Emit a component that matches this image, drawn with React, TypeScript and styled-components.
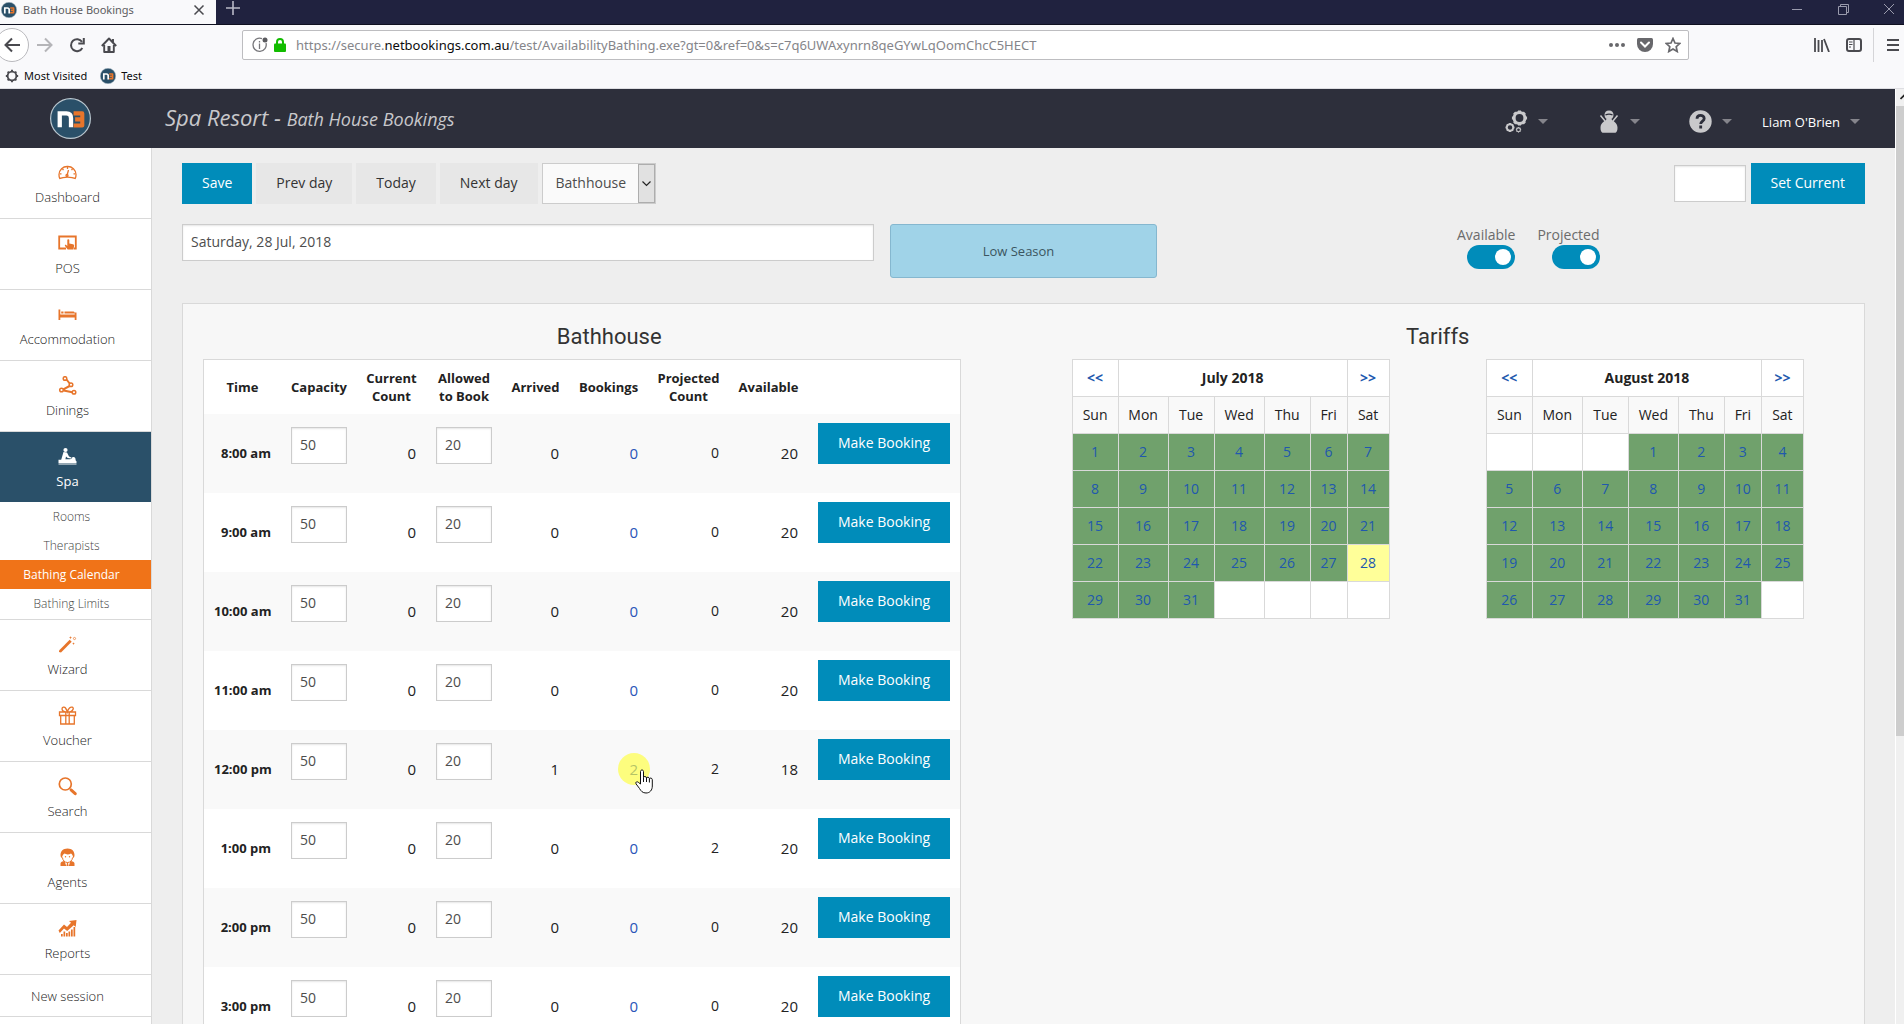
import React from "react";
import styled, { createGlobalStyle, css } from "styled-components";

const blue = "#008cba";
const orange = "#e7752b";
const line = "#d9d9d9";
const body = '"Open Sans", "Noto Sans", sans-serif';
const chrome = '"Noto Sans", "Open Sans", sans-serif';

const GlobalStyle = createGlobalStyle`
  *, *::before, *::after { box-sizing: border-box; }
  body { margin: 0; font-family: ${body}; font-size: 14px; color: #222; background: #eee; }
  a { color: inherit; text-decoration: none; }
  button, input, select { font-family: inherit; border-radius: 0; margin: 0; }
  ul { list-style: none; margin: 0; padding: 0; }
`;

const Window = styled.div`
  height: 100vh;
  display: flex;
  flex-direction: column;
  overflow: hidden;
`;

/* ---------- browser frame ---------- */

const TitleBar = styled.div`
  flex: none;
  height: 25px;
  display: flex;
  overflow: hidden;
  background: #20223f;
  border-bottom: 1px solid #0f1020;
`;

const Tab = styled.div`
  width: 216px;
  height: 25px;
  padding: 0 11px 6px 1px;
  display: flex;
  align-items: center;
  gap: 6px;
  background: #f9f9fb;
  font: 11px/18px ${chrome};
  color: #5c5c60;
`;

const TabName = styled.span`
  flex: 1;
  white-space: nowrap;
`;

const IconButton = styled.button<{ $w?: number; $color?: string }>`
  width: ${(p) => p.$w ?? 32}px;
  padding: 0;
  border: 0;
  background: none;
  color: ${(p) => p.$color ?? "#4a4a4f"};
  display: flex;
  align-items: center;
  justify-content: center;
  svg { display: block; }
`;

const NewTab = styled(IconButton)`
  height: 16px;
`;

const WindowControls = styled.div`
  margin: 0 -8px 0 auto;
  height: 18px;
  display: flex;
`;

const NavBar = styled.div`
  flex: none;
  height: 39px;
  display: flex;
  align-items: center;
  background: #f9f9fb;
`;

const NavButtons = styled.div`
  width: 242px;
  height: 34px;
  display: flex;
  overflow: hidden;
`;

const BackButton = styled(IconButton)`
  width: 34px;
  height: 34px;
  margin-left: -5px;
  border: 1px solid #b9b9bd;
  border-radius: 50%;
  background: #fff;
`;

const AddressBar = styled.div`
  flex: 1;
  height: 30px;
  padding: 0 1px 0 9px;
  display: flex;
  align-items: center;
  gap: 6px;
  border: 1px solid #bdbdc0;
  border-radius: 2px;
  background: #fff;
  font: 13px/20px ${chrome};
  color: #85858a;
  b { font-weight: 400; color: #0c0c0d; }
`;

const Address = styled.span`
  flex: 1;
  padding-left: 4px;
  white-space: nowrap;
`;

const AddressTools = styled.div`
  display: flex;
`;

const NavTools = styled.div`
  width: 215px;
  height: 34px;
  display: flex;
  justify-content: flex-end;
  overflow: hidden;
`;

const MenuButton = styled(IconButton)`
  width: 31px;
  margin-left: 3px;
  padding-left: 8px;
  border-left: 1px solid #d5d5d8;
`;

const BookmarkBar = styled.div`
  flex: none;
  height: 25px;
  padding: 0 5px;
  display: flex;
  gap: 13px;
  background: #f9f9fb;
  border-bottom: 1px solid #dedee2;
`;

const Bookmark = styled.a`
  display: flex;
  align-items: center;
  gap: 5px;
  font: 11px/24px ${chrome};
  color: #0c0c0d;
`;

/* ---------- site frame ---------- */

const Viewport = styled.div`
  flex: 1;
  min-height: 0;
  display: flex;
`;

const Site = styled.div`
  flex: 1;
  min-width: 0;
  display: flex;
  flex-direction: column;
`;

const Header = styled.header`
  flex: none;
  height: 59px;
  display: flex;
  align-items: center;
  background: #2d2f3b;
`;

const LogoLink = styled.a`
  width: 165px;
  padding-left: 50px;
  svg { display: block; }
`;

const Title = styled.h1`
  flex: 1;
  margin: 0;
  padding-bottom: 2px;
  font-size: 22px;
  line-height: 30px;
  font-weight: 400;
  font-style: italic;
  color: #c8c8cb;
  small { font-size: 18px; }
`;

const HeaderMenus = styled.div`
  display: flex;
  align-items: center;
  gap: 30px;
  padding-right: 35px;
`;

const IconMenus = styled.div`
  display: flex;
  gap: 49px;
`;

const HeaderMenu = styled.button<{ $bright?: boolean }>`
  padding: 6px 0 0;
  display: flex;
  align-items: center;
  gap: 10px;
  border: 0;
  background: none;
  color: ${(p) => (p.$bright ? "#fff" : "#c9c9cb")};
  font-size: 13px;
  line-height: 24px;
`;

const Caret = styled.span`
  border: 5px solid transparent;
  border-top-color: #85858c;
  border-bottom: 0;
`;

const Main = styled.div`
  flex: 1;
  min-height: 0;
  display: flex;
  overflow: hidden;
`;

const Sidebar = styled.nav`
  flex: none;
  width: 152px;
  background: #fff;
  border-right: 1px solid ${line};
`;

const NavItem = styled.a<{ $active?: boolean; $plain?: boolean }>`
  height: ${(p) => (p.$plain ? 42 : 71)}px;
  padding: ${(p) => (p.$plain ? "11px" : "15px")} 16px 0 0;
  display: flex;
  flex-direction: column;
  align-items: center;
  gap: 5px;
  border-bottom: 1px solid ${line};
  font-size: 13px;
  line-height: 20px;
  font-weight: 300;
  color: #222;
  svg { display: block; color: ${orange}; }
  ${(p) =>
    p.$active &&
    css`
      height: 70px;
      border-bottom: 0;
      background: #2a5069;
      color: #fff;
      font-weight: 400;
      svg { color: #fff; }
    `}
`;

const SubMenu = styled.ul`
  padding-bottom: 1px;
  border-bottom: 1px solid ${line};
`;

const SubLink = styled.a<{ $active?: boolean }>`
  display: block;
  padding: 0 8px 0 0;
  text-align: center;
  font-size: 12px;
  line-height: 29px;
  font-weight: ${(p) => (p.$active ? 400 : 300)};
  color: ${(p) => (p.$active ? "#fff" : "#444")};
  background: ${(p) => (p.$active ? "#f07318" : "#fff")};
`;

const Content = styled.main`
  flex: 1;
  min-width: 0;
  padding: 15px 30px 0;
  background: #eee;
`;

const Toolbar = styled.div`
  display: flex;
  align-items: center;
  gap: 4px;
  margin-bottom: 20px;
`;

const Button = styled.button<{ $primary?: boolean }>`
  height: 41px;
  padding: 0 20px 2px;
  border: 0;
  font-size: 14px;
  white-space: nowrap;
  color: ${(p) => (p.$primary ? "#fff" : "#333")};
  background: ${(p) => (p.$primary ? blue : "#e7e7e7")};
`;

const field = css`
  height: 37px;
  padding: 0 8px 2px;
  border: 1px solid #ccc;
  background: #fff;
  box-shadow: inset 0 1px 2px rgba(0, 0, 0, 0.1);
  font-size: 14px;
  color: #4d4d4d;
`;

const SelectWrap = styled.span`
  position: relative;
  display: block;
`;

const Select = styled.select`
  appearance: none;
  width: 114px;
  height: 41px;
  padding: 0 20px 2px 13px;
  border: 1px solid #ccc;
  background: #fafafa;
  font-size: 14px;
  color: #4d4d4d;
`;

const SelectArrow = styled.span`
  position: absolute;
  top: 1px;
  right: 1px;
  bottom: 1px;
  width: 17px;
  display: flex;
  align-items: center;
  justify-content: center;
  border: 1px solid #adadad;
  background: #e1e1e1;
  pointer-events: none;
`;

const CurrentGroup = styled.form`
  margin-left: auto;
  display: flex;
  align-items: center;
  gap: 5px;
`;

const CurrentInput = styled.input`
  ${field}
  width: 72px;
`;

const Filters = styled.div`
  display: grid;
  grid-template-columns: 692fr 267fr 268fr 408fr;
  gap: 16px;
  align-items: start;
  margin-bottom: 25px;
`;

const DateInput = styled.input`
  ${field}
  width: 100%;
`;

const Season = styled.div`
  height: 54px;
  padding-right: 10px;
  border: 1px solid #85b7cf;
  border-radius: 3px;
  background: #a0d3e8;
  text-align: center;
  font-size: 13px;
  line-height: 52px;
  color: #3b5560;
`;

const Toggles = styled.div`
  grid-column: 4;
  display: flex;
  gap: 22px;
`;

const Toggle = styled.label`
  display: flex;
  flex-direction: column;
  align-items: flex-end;
  line-height: 21px;
  color: #6b6b6b;
`;

const Switch = styled.input`
  appearance: none;
  width: 48px;
  height: 24px;
  padding: 4px;
  display: flex;
  justify-content: flex-end;
  border-radius: 12px;
  background: ${blue};
  &::before {
    content: "";
    width: 16px;
    height: 16px;
    border-radius: 50%;
    background: #fff;
  }
  &:not(:checked) { justify-content: flex-start; background: #ccc; }
`;

const Panel = styled.section`
  padding: 20px;
  display: grid;
  grid-template-columns: 1fr 1fr;
  gap: 16px;
  align-items: start;
  border: 1px solid ${line};
  background: #f7f7f7;
`;

const PanelTitle = styled.h2`
  margin: 0 0 9px;
  text-align: center;
  font: 400 22px/26px Roboto, sans-serif;
  color: #333;
`;

/* ---------- bookings table ---------- */

const Bookings = styled.table`
  width: 758px;
  border: 1px solid ${line};
  border-spacing: 0;
  table-layout: fixed;
  background: #fff;
  thead th { font-size: 13px; line-height: 18px; padding: 9px 8px; }
  tbody tr:nth-child(odd) { background: #f9f9f9; }
`;

const Slot = styled.th`
  padding: 9px 10px 11px;
  font-size: 13px;
  line-height: 18px;
  text-align: right;
  white-space: nowrap;
`;

const Cell = styled.td`
  padding: 9px 10px;
`;

const Count = styled.td<{ $small?: boolean }>`
  padding: 9px 10px 11px;
  text-align: right;
  font-size: ${(p) => (p.$small ? 14 : 15)}px;
  line-height: 18px;
  a { position: relative; color: #2a55b8; }
`;

const CountInput = styled.input`
  ${field}
  display: block;
  width: 56px;
  margin-bottom: 16px;
`;

const BookButton = styled(Button)`
  display: block;
  width: 132px;
  margin-bottom: 20px;
`;

const Highlight = styled.span`
  position: absolute;
  left: -11px;
  top: -6px;
  width: 32px;
  height: 32px;
  border-radius: 50%;
  background: rgba(255, 255, 60, 0.65);
`;

const Pointer = styled.svg`
  position: absolute;
  left: 6px;
  top: 10px;
`;

/* ---------- calendars ---------- */

const Calendars = styled.div`
  display: grid;
  grid-template-columns: 1fr 1fr;
  gap: 16px;
  justify-items: center;
`;

const Calendar = styled.table`
  width: 318px;
  table-layout: fixed;
  border-collapse: collapse;
  background: #fff;
  text-align: center;
  line-height: 20px;
  td, th { height: 37px; padding: 0; border: 1px solid ${line}; font-size: 14px; }
  a { color: #2058ae; }
`;

const DayName = styled.th`
  background: #f9f9f9;
  font-weight: 400;
`;

const Day = styled.td<{ $state: "open" | "today" | "none" }>`
  background: ${(p) =>
    p.$state === "open" ? "#70a16c" : p.$state === "today" ? "#ffff99" : "#fff"};
`;

/* ---------- page scroll bar ---------- */

const ScrollBar = styled.div`
  flex: none;
  width: 9px;
  display: flex;
  flex-direction: column;
  overflow: hidden;
  background: #f0f0f0;
  border-left: 1px solid #fff;
`;

const ScrollArrow = styled.span`
  height: 17px;
  padding: 5px 0 0 4px;
  svg { display: block; }
`;

const ScrollThumb = styled.span`
  height: calc(100% - 305px);
  background: #cdcdcd;
`;

/* ---------- drawings ---------- */

const Logo = ({ size }: { size: number }) => (
  <svg width={size} height={size} viewBox="0 0 40 40" aria-hidden="true">
    <circle cx="20" cy="20" r="19.4" fill="#2a5069" stroke="#b9c6ce" strokeWidth="1.2" />
    <path d="M9.500 28.500V15h6.500q4.500 0 4.500 4.500v9" fill="none" stroke="#fff" strokeWidth="4.200" />
    <path d="M23 15h8.500v11.800H23M24.500 20.900h7" fill="none" stroke={orange} strokeWidth="4" strokeLinejoin="round" />
  </svg>
);

type IconName = keyof typeof shapes;

const shapes = {
  dashboard: (
    <g fill="none" stroke="currentColor" strokeWidth="1.300">
      <path d="M1.800 15.500A8.300 8.300 0 0 1 1 11.500 8.200 8.200 0 0 1 9.500 3.500a8.200 8.200 0 0 1 8.500 8 8.300 8.300 0 0 1-.8 4l-3.200-.8a18 18 0 0 0-9 0z" />
      <path d="M9 12.500l1.500-5.500M9.500 4v2M4.500 6l1 1.200M14.500 6l-1 1.200M2 10.800h1.500M15.500 10.800H17" />
      <circle cx="9" cy="12.500" r="1" />
    </g>
  ),
  pos: (
    <>
      <path d="M8 14.500H1.200v-12h16.600v12H16" fill="none" stroke="currentColor" strokeWidth="1.800" />
      <path d="M9.300 6.200c0-1.300 2-1.300 2 0v3.200l3.700.8c.8.200 1.200.8 1.100 1.600l-.6 3.700h-5.800L7 12c-.5-.9.400-1.600 1.200-1l1.100.9z" fill="currentColor" />
    </>
  ),
  bed: (
    <path d="M.5 4.500h1.800v5h14.400V7.500h1.800v7.500h-1.800v-2.500H2.300V15H.5zM3.200 6.500h2.300v2H3.200zM6.500 6.500h9c.8 0 1.200.8 1.200 2h-10.200z" fill="currentColor" />
  ),
  dining: (
    <g fill="none" stroke="currentColor" strokeWidth="1.500">
      <path d="M8.500 3.500l3.200 4M11.600 10l-6.300 3.300M5.600 14.500l8.700 1.800" strokeWidth="2" />
      <circle cx="7" cy="2.500" r="1.800" />
      <circle cx="13" cy="8.800" r="1.800" />
      <circle cx="3.500" cy="14" r="1.800" />
      <circle cx="16" cy="16.300" r="1.800" />
    </g>
  ),
  spa: (
    <g fill="currentColor">
      <circle cx="7.500" cy="3" r="2.100" />
      <path d="M5.500 5l3.500.6 2 3.800 2.500 1-.5 1.200-3.300-.6L8 9.500l-.6 2.700h4.600l1.500-.4c.4-2.600 4-2.200 4 .2l.2 1.500.8.800V16H.5v-3.300h2.700z" />
      <path d="M.5 16.500h18v1H.5z" />
    </g>
  ),
  wizard: (
    <g fill="currentColor">
      <path d="M1 15.500L11.700 4.800l2 2L3 17.500 1 17z" />
      <path d="M12.500 1l.4 1.300 1.300.4-1.300.4-.4 1.300-.4-1.300-1.300-.4 1.300-.4zM15.500 7.300l.4 1 1 .4-1 .4-.4 1-.4-1-1-.4 1-.4z" />
      <circle cx="16.500" cy="3.500" r="1.100" fill="none" stroke="currentColor" strokeWidth=".7" />
    </g>
  ),
  gift: (
    <g fill="none" stroke="currentColor" strokeWidth="1.300">
      <path d="M1.500 6h16v3.500h-16zM2.700 9.500V18h13.600V9.500M7.800 6v12M11.200 6v12M9.500 6C7 6 4 5 4 3S6.500.6 7.500 2 9.500 6 9.500 6s.5-2.600 2-4 4.300-1 3.700 1S12 6 9.500 6z" />
    </g>
  ),
  search: (
    <g fill="none" stroke="currentColor">
      <circle cx="7.300" cy="7" r="6" strokeWidth="1.700" />
      <path d="M12 12l1.500 1.200" strokeWidth="2" />
      <path d="M13.300 13.200l3.900 3.500" strokeWidth="3" strokeLinecap="round" />
    </g>
  ),
  agent: (
    <g fill="currentColor">
      <path d="M9.500.5c4.500 0 7 2.800 7 6.500 0 1.500-.5 2.500-1.500 3.200.2-2.500-.8-4-2-4.800-2 1.500-5 1.200-6.500.2C5 6.500 4.200 8 4 10.200 3 9.500 2.500 8.500 2.500 7c0-3.700 2.500-6.500 7-6.500z" />
      <path d="M4.500 9.500a5 5 0 0 0 10 0" fill="none" stroke="currentColor" strokeWidth="1" />
      <circle cx="7.500" cy="8.700" r=".7" />
      <circle cx="11.500" cy="8.700" r=".7" />
      <path d="M2.500 18v-2.500c0-1.500 2-2.200 4-2.500L8.300 18zM16.500 18v-2.500c0-1.500-2-2.200-4-2.500L10.700 18zM9 14.500h1l.5 3.500h-2z" />
    </g>
  ),
  reports: (
    <g fill="currentColor">
      <path d="M.5 11.500L6 5.500l3 2.500 4-4.200-2-1.800 7.500-1-.8 7-2-1.800L9.200 12 6 9.500 1.800 14z" />
      <path d="M3 15h1.700v2.500H3zM5.500 12.500h1.700v5H5.500zM8 14h1.700v3.500H8zM10.500 12.500h1.700v5h-1.700zM13 10.500h1.700v7H13zM15.500 8h1.700v9.500h-1.700z" />
    </g>
  ),
};

const MenuIcon = ({ name }: { name: IconName }) => (
  <svg width="19" height="19" viewBox="0 0 19 19" aria-hidden="true">
    {shapes[name]}
  </svg>
);

const Stroke = ({ d, w, h = w, sw = 1 }: { d: string; w: number; h?: number; sw?: number }) => (
  <svg width={w} height={h} viewBox={`0 0 ${w} ${h}`} fill="none" stroke="currentColor" strokeWidth={sw} aria-hidden="true">
    <path d={d} />
  </svg>
);

const teeth = (cx: number, cy: number, r: number, n: number) =>
  Array.from({ length: n }, (_, i) => {
    const a = (i * 2 * Math.PI) / n;
    const x = Math.cos(a);
    const y = Math.sin(a);
    return `M${cx + x * r} ${cy + y * r}L${cx + x * r * 1.4} ${cy + y * r * 1.4}`;
  }).join("");

const Gear = ({ cx, cy, r, sw }: { cx: number; cy: number; r: number; sw: number }) => (
  <g fill="none" stroke="currentColor" strokeWidth={sw}>
    <circle cx={cx} cy={cy} r={r} />
    <path d={teeth(cx, cy, r, 8)} />
  </g>
);

/* ---------- data ---------- */

const menuTop: { label: string; icon: IconName; active?: boolean }[] = [
  { label: "Dashboard", icon: "dashboard" },
  { label: "POS", icon: "pos" },
  { label: "Accommodation", icon: "bed" },
  { label: "Dinings", icon: "dining" },
  { label: "Spa", icon: "spa", active: true },
];

const subMenu = ["Rooms", "Therapists", "Bathing Calendar", "Bathing Limits"];

const menuBottom: { label: string; icon: IconName }[] = [
  { label: "Wizard", icon: "wizard" },
  { label: "Voucher", icon: "gift" },
  { label: "Search", icon: "search" },
  { label: "Agents", icon: "agent" },
  { label: "Reports", icon: "reports" },
];

const columns: [string, number][] = [
  ["Time", 77],
  ["Capacity", 76],
  ["Current Count", 69],
  ["Allowed to Book", 76],
  ["Arrived", 67],
  ["Bookings", 79],
  ["Projected Count", 81],
  ["Available", 79],
  ["", 152],
];

const slots = [
  { time: "8:00 am", arrived: 0, bookings: 0, projected: 0, available: 20 },
  { time: "9:00 am", arrived: 0, bookings: 0, projected: 0, available: 20 },
  { time: "10:00 am", arrived: 0, bookings: 0, projected: 0, available: 20 },
  { time: "11:00 am", arrived: 0, bookings: 0, projected: 0, available: 20 },
  { time: "12:00 pm", arrived: 1, bookings: 2, projected: 2, available: 18 },
  { time: "1:00 pm", arrived: 0, bookings: 0, projected: 2, available: 20 },
  { time: "2:00 pm", arrived: 0, bookings: 0, projected: 0, available: 20 },
  { time: "3:00 pm", arrived: 0, bookings: 0, projected: 0, available: 20 },
];

const dayNames: [string, number][] = [
  ["Sun", 46],
  ["Mon", 50],
  ["Tue", 46],
  ["Wed", 50],
  ["Thu", 46],
  ["Fri", 37],
  ["Sat", 42],
];

const Month = ({ title, offset, today }: { title: string; offset: number; today?: number }) => (
  <Calendar>
    <colgroup>
      {dayNames.map(([name, width]) => (
        <col key={name} width={width} />
      ))}
    </colgroup>
    <thead>
      <tr>
        <th><a href="#prev">&lt;&lt;</a></th>
        <th colSpan={5}>{title}</th>
        <th><a href="#next">&gt;&gt;</a></th>
      </tr>
      <tr>
        {dayNames.map(([name]) => (
          <DayName key={name}>{name}</DayName>
        ))}
      </tr>
    </thead>
    <tbody>
      {[0, 1, 2, 3, 4].map((week) => (
        <tr key={week}>
          {dayNames.map(([name], i) => {
            const n = week * 7 + i + 1 - offset;
            const real = n >= 1 && n <= 31;
            return (
              <Day key={name} $state={!real ? "none" : n === today ? "today" : "open"}>
                {real && <a href={`#day-${n}`}>{n}</a>}
              </Day>
            );
          })}
        </tr>
      ))}
    </tbody>
  </Calendar>
);

export default function App() {
  return (
    <Window>
      <GlobalStyle />
      <TitleBar>
        <Tab>
          <Logo size={16} />
          <TabName>Bath House Bookings</TabName>
          <IconButton $w={12} aria-label="Close tab">
            <Stroke w={12} d="M1.500 1.500l9 9M10.500 1.500l-9 9" sw={1.5} />
          </IconButton>
        </Tab>
        <NewTab $w={34} $color="#b9bac8" aria-label="New tab">
          <Stroke w={14} d="M7 0v14M0 7h14" sw={1.6} />
        </NewTab>
        <WindowControls>
          <IconButton $w={46} $color="#9a9bad" aria-label="Minimise">
            <Stroke w={10} d="M0 5.500h10" />
          </IconButton>
          <IconButton $w={46} $color="#9a9bad" aria-label="Restore">
            <Stroke w={11} d="M.5 2.500h8v8h-8zM2.500 2.500v-2h8v8h-2" />
          </IconButton>
          <IconButton $w={46} $color="#9a9bad" aria-label="Close">
            <Stroke w={10} d="M0 0l10 10M10 0L0 10" />
          </IconButton>
        </WindowControls>
      </TitleBar>
      <NavBar>
        <NavButtons>
          <BackButton aria-label="Back">
            <Stroke w={16} d="M16 8H1.500M8 1.500L1.500 8 8 14.500" sw={2} />
          </BackButton>
          <IconButton $color="#b5b5b8" aria-label="Forward">
            <Stroke w={16} d="M0 8h14.500M8 1.500L14.500 8 8 14.500" sw={2} />
          </IconButton>
          <IconButton aria-label="Reload">
            <Stroke w={16} d="M13.300 11A6 6 0 1 1 13 4.800M14.800 1v5.500H9.300" sw={2} />
          </IconButton>
          <IconButton aria-label="Home">
            <svg width="16" height="16" viewBox="0 0 16 16" aria-hidden="true">
              <path d="M.8 9L8 1.500 15.200 9M3.200 8v7h9.600V8M12 2v3" fill="none" stroke="currentColor" strokeWidth="1.900" strokeLinejoin="round" />
              <path d="M6.500 9h3v5h-3z" fill="currentColor" />
            </svg>
          </IconButton>
        </NavButtons>
        <AddressBar>
          <svg width="16" height="16" viewBox="0 0 16 16" aria-hidden="true">
            <path d="M10 1.600A6.600 6.600 0 1 0 14 6M7.500 6.500V12M7.500 4v1.500" fill="none" stroke="#77777b" strokeWidth="1.300" />
            <circle cx="13" cy="3" r="2.500" fill="#5a5a5e" />
          </svg>
          <svg width="12" height="14" viewBox="0 0 12 14" aria-hidden="true">
            <path d="M3 6V4a3 3 0 0 1 6 0v2" fill="none" stroke="#12bc00" strokeWidth="2" />
            <rect y="5.500" width="12" height="8.500" rx="1" fill="#12bc00" />
          </svg>
          <Address>
            https://secure.<b>netbookings.com.au</b>/test/AvailabilityBathing.exe?gt=0&amp;ref=0&amp;s=c7q6UWAxynrn8qeGYwLqOomChcC5HECT
          </Address>
          <AddressTools>
            <IconButton $w={28} $color="#68686c" aria-label="Page actions">
              <svg width="16" height="4" viewBox="0 0 16 4" fill="currentColor" aria-hidden="true">
                <circle cx="2" cy="2" r="2" /><circle cx="8" cy="2" r="2" /><circle cx="14" cy="2" r="2" />
              </svg>
            </IconButton>
            <IconButton $w={28} $color="#68686c" aria-label="Save to Pocket">
              <svg width="16" height="14" viewBox="0 0 16 14" aria-hidden="true">
                <path d="M1.500 0h13Q16 0 16 1.500V6a8 8 0 0 1-16 0V1.500Q0 0 1.500 0z" fill="currentColor" />
                <path d="M4 4.500l4 4 4-4" fill="none" stroke="#fff" strokeWidth="2" strokeLinecap="round" />
              </svg>
            </IconButton>
            <IconButton $w={28} $color="#68686c" aria-label="Bookmark this page">
              <Stroke w={16} d="M8 1.500l2 4.500 4.800.5-3.600 3.200 1 4.800L8 12l-4.200 2.500 1-4.800L1.200 6.500 6 6z" sw={1.7} />
            </IconButton>
          </AddressTools>
        </AddressBar>
        <NavTools>
          <IconButton aria-label="Library">
            <Stroke w={16} h={14} d="M1 0v14M4.500 2v12M8 2v12M10 1l5 13" sw={1.8} />
          </IconButton>
          <IconButton aria-label="Sidebars">
            <svg width="16" height="14" viewBox="0 0 16 14" fill="none" stroke="currentColor" aria-hidden="true">
              <rect x="1" y="1" width="14" height="12" rx="2" strokeWidth="2" />
              <path d="M8 1v12M3 4h3.500M3 6.500h3.500M3 9h2" strokeWidth="1.200" />
            </svg>
          </IconButton>
          <MenuButton aria-label="Open menu">
            <Stroke w={12} d="M0 1h12M0 6h12M0 11h12" sw={2} />
          </MenuButton>
        </NavTools>
      </NavBar>
      <BookmarkBar>
        <Bookmark href="#most-visited">
          <svg width="14" height="14" viewBox="0 0 14 14" color="#4a4a4f" aria-hidden="true">
            <Gear cx={7} cy={7} r={4.4} sw={1.9} />
          </svg>
          Most Visited
        </Bookmark>
        <Bookmark href="#test">
          <Logo size={16} />
          Test
        </Bookmark>
      </BookmarkBar>

      <Viewport>
        <Site>
          <Header>
            <LogoLink href="#home" aria-label="Home">
              <Logo size={41} />
            </LogoLink>
            <Title>
              Spa Resort - <small>Bath House Bookings</small>
            </Title>
            <HeaderMenus>
              <IconMenus>
                <HeaderMenu aria-label="Settings">
                  <svg width="23" height="23" viewBox="0 0 23 23" aria-hidden="true">
                    <Gear cx={14.500} cy={8} r={5.4} sw={3} />
                    <Gear cx={5} cy={17.5} r={3.2} sw={1.9} />
                    <Gear cx={13.500} cy={19.800} r={1.9} sw={1.1} />
                  </svg>
                  <Caret />
                </HeaderMenu>
                <HeaderMenu aria-label="Guests">
                  <svg width="23" height="23" viewBox="0 0 23 23" fill="currentColor" aria-hidden="true">
                    <path d="M12 .5c3 0 4.500 2 4.500 4.500S15 9.500 12 9.500 7.500 7.500 7.500 5 9 .5 12 .5z" />
                    <path d="M8.500 4.800q3.500-1.500 7 0" fill="none" stroke="#2d2f3b" strokeWidth="1.300" />
                    <path d="M9.500 9h5c.5 2 6 3 6 8.500 0 3-.5 4.200-2 5.200h-13c-1.500-1-2-2.200-2-5.200 0-5.500 5.500-6.500 6-8.500z" />
                    <path d="M3.500 5.500L8 11M20.500 5.500L16 11" fill="none" stroke="currentColor" strokeWidth="1.500" />
                  </svg>
                  <Caret />
                </HeaderMenu>
                <HeaderMenu aria-label="Help">
                  <svg width="23" height="23" viewBox="0 0 23 23" aria-hidden="true">
                    <circle cx="11.500" cy="11.500" r="11.200" fill="currentColor" />
                    <path d="M8 8.700c0-4.600 7.200-4.300 7.200-.3 0 2.700-3.500 2.700-3.500 5.600M11.700 15.500v3" fill="none" stroke="#2d2f3b" strokeWidth="2.800" />
                  </svg>
                  <Caret />
                </HeaderMenu>
              </IconMenus>
              <HeaderMenu $bright>
                Liam O'Brien
                <Caret />
              </HeaderMenu>
            </HeaderMenus>
          </Header>

          <Main>
            <Sidebar>
              {menuTop.map((item) => (
                <NavItem key={item.label} href={`#${item.icon}`} $active={item.active}>
                  <MenuIcon name={item.icon} />
                  {item.label}
                </NavItem>
              ))}
              <SubMenu>
                {subMenu.map((label) => (
                  <li key={label}>
                    <SubLink href="#spa" $active={label === "Bathing Calendar"}>{label}</SubLink>
                  </li>
                ))}
              </SubMenu>
              {menuBottom.map((item) => (
                <NavItem key={item.label} href={`#${item.icon}`}>
                  <MenuIcon name={item.icon} />
                  {item.label}
                </NavItem>
              ))}
              <NavItem href="#session" $plain>New session</NavItem>
            </Sidebar>

            <Content>
              <Toolbar>
                <Button $primary>Save</Button>
                <Button>Prev day</Button>
                <Button>Today</Button>
                <Button>Next day</Button>
                <SelectWrap>
                  <Select aria-label="Location" defaultValue="Bathhouse">
                    <option>Bathhouse</option>
                  </Select>
                  <SelectArrow>
                    <Stroke w={9} h={6} d="M.5.5l4 4 4-4" sw={1.2} />
                  </SelectArrow>
                </SelectWrap>
                <CurrentGroup onSubmit={(e) => e.preventDefault()}>
                  <CurrentInput aria-label="Current count" />
                  <Button $primary>Set Current</Button>
                </CurrentGroup>
              </Toolbar>

              <Filters>
                <DateInput aria-label="Date" defaultValue="Saturday, 28 Jul, 2018" />
                <Season>Low Season</Season>
                <Toggles>
                  <Toggle>
                    Available
                    <Switch type="checkbox" defaultChecked />
                  </Toggle>
                  <Toggle>
                    Projected
                    <Switch type="checkbox" defaultChecked />
                  </Toggle>
                </Toggles>
              </Filters>

              <Panel>
                <div>
                  <PanelTitle>Bathhouse</PanelTitle>
                  <Bookings>
                    <colgroup>
                      {columns.map(([name, width]) => (
                        <col key={name} width={width} />
                      ))}
                    </colgroup>
                    <thead>
                      <tr>
                        {columns.map(([name]) => (
                          <th key={name}>{name}</th>
                        ))}
                      </tr>
                    </thead>
                    <tbody>
                      {slots.map((s) => (
                        <tr key={s.time}>
                          <Slot scope="row">{s.time}</Slot>
                          <Cell><CountInput aria-label={`Capacity ${s.time}`} defaultValue="50" /></Cell>
                          <Count>0</Count>
                          <Cell><CountInput aria-label={`Allowed ${s.time}`} defaultValue="20" /></Cell>
                          <Count>{s.arrived}</Count>
                          <Count>
                            <a href="#bookings">
                              {s.bookings}
                              {s.time === "12:00 pm" && (
                                <>
                                  <Highlight />
                                  <Pointer width="19" height="25" viewBox="0 0 19 25" aria-hidden="true">
                                    <path
                                      d="M5.500 15V2.500c0-2 3-2 3 0V8.500c.3-1.500 3-1.300 3 .5.400-1.300 2.900-1 2.900.7.500-1.100 2.900-.8 2.900 1V17c0 4-2.300 7-6.300 7-3.500 0-5-2-6.500-4.500L1 14.800c-.8-1.700 1-2.700 2.300-1.500z"
                                      fill="#fff" stroke="#111" strokeWidth="1"
                                    />
                                    <path d="M8.500 8.500V13M11.500 9v4M14.400 10v3.500" stroke="#111" fill="none" />
                                  </Pointer>
                                </>
                              )}
                            </a>
                          </Count>
                          <Count $small>{s.projected}</Count>
                          <Count>{s.available}</Count>
                          <Cell><BookButton $primary>Make Booking</BookButton></Cell>
                        </tr>
                      ))}
                    </tbody>
                  </Bookings>
                </div>
                <div>
                  <PanelTitle>Tariffs</PanelTitle>
                  <Calendars>
                    <Month title="July 2018" offset={0} today={28} />
                    <Month title="August 2018" offset={3} />
                  </Calendars>
                </div>
              </Panel>
            </Content>
          </Main>
        </Site>
        <ScrollBar aria-hidden="true">
          <ScrollArrow>
            <Stroke w={9} h={6} d="M.5 5l4-4 4 4" sw={1.6} />
          </ScrollArrow>
          <ScrollThumb />
        </ScrollBar>
      </Viewport>
    </Window>
  );
}
